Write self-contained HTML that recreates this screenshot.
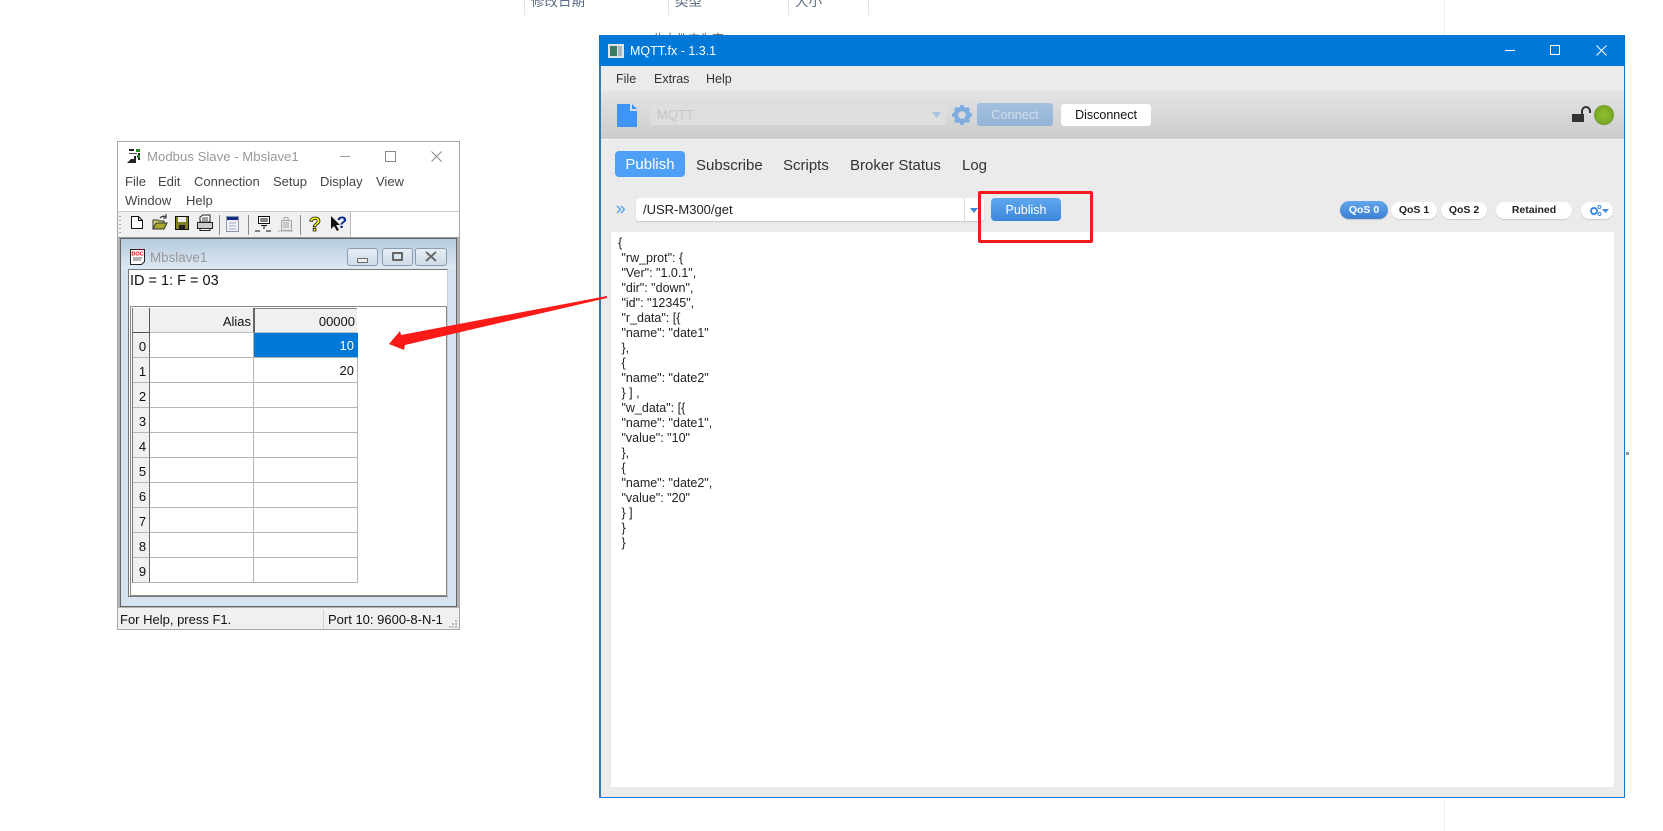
<!DOCTYPE html>
<html><head><meta charset="utf-8"><title>MQTT.fx and Modbus Slave</title>
<style>
html,body{margin:0;padding:0;background:#fff;width:1663px;height:831px;overflow:hidden}
body{position:relative;font-family:"Liberation Sans","Noto Sans CJK SC",sans-serif;color:#222}
.a{position:absolute;box-sizing:border-box}
.t{position:absolute;white-space:nowrap;line-height:16px;height:16px}
.m{font-size:13px;color:#444}
.q{position:absolute;box-sizing:border-box;top:202px;height:17px;background:#fff;border-radius:9px;text-align:center;font-size:10.5px;font-weight:bold;line-height:17px;color:#222;box-shadow:0 1px 1px #ccc}
.row{position:absolute;left:133px;width:17px;height:25px;background:#f0f0f0;border-bottom:1px solid #b5b5b5;border-right:1px solid #666;box-sizing:border-box;font-size:13px;line-height:27px;text-align:center;padding-left:3px;color:#111}
.cell{position:absolute;height:25px;box-sizing:border-box;border-bottom:1px solid #b5b5b5;border-right:1px solid #b5b5b5;font-size:13px;line-height:26px;text-align:right;padding-right:2px;color:#111}
.cb{position:absolute;top:248px;height:18px;box-sizing:border-box;border:1px solid #8b9cae;border-radius:3px;background:linear-gradient(#e6edf4,#cfdbe7)}
</style></head><body>

<!-- background explorer fragments -->
<div class="a" style="left:524px;top:0;width:1px;height:15px;background:#e5e5e5"></div>
<div class="a" style="left:668px;top:0;width:1px;height:15px;background:#e5e5e5"></div>
<div class="a" style="left:788px;top:0;width:1px;height:15px;background:#e5e5e5"></div>
<div class="a" style="left:868px;top:0;width:1px;height:15px;background:#e5e5e5"></div>
<div class="t" style="left:531px;top:-6px;font-size:13.5px;color:#5a6c84">修改日期</div>
<div class="t" style="left:675px;top:-6px;font-size:13.5px;color:#5a6c84">类型</div>
<div class="t" style="left:795px;top:-6px;font-size:13.5px;color:#5a6c84">大小</div>
<div class="t" style="left:652px;top:31px;font-size:12px;color:#666">此文件夹为空。</div>
<div class="a" style="left:1444px;top:0;width:1px;height:831px;background:#f0f0f0"></div>
<div class="a" style="left:1626px;top:452px;width:3px;height:3px;background:#8c93a0"></div>

<!-- Modbus Slave window -->
<div class="a" style="left:117px;top:141px;width:343px;height:489px;background:#fff;border:1px solid #a6a6a6"></div>
<svg class="a" style="left:126px;top:148px" width="16" height="16" viewBox="0 0 16 16"><rect x="3" y="1" width="5" height="2" fill="#222"/><rect x="10" y="1" width="4" height="3" fill="#2a8a2a"/><rect x="12" y="5" width="2" height="7" fill="#222"/><rect x="11" y="7" width="3" height="3" fill="#2a8a2a"/><path d="M1 15L5 11h3v-3h2v7z" fill="#222"/><rect x="3" y="5" width="8" height="1" fill="#555"/></svg>
<div class="t" style="left:147px;top:149px;font-size:13.2px;color:#999">Modbus Slave - Mbslave1</div>
<div class="a" style="left:340px;top:156px;width:10px;height:1px;background:#999"></div>
<div class="a" style="left:385px;top:151px;width:11px;height:11px;border:1px solid #888"></div>
<svg class="a" style="left:431px;top:151px" width="11" height="11"><path d="M.5.5l10 10M10.500.5l-10 10" stroke="#888" fill="none"/></svg>
<div class="t m" style="left:125px;top:174px">File</div>
<div class="t m" style="left:158px;top:174px">Edit</div>
<div class="t m" style="left:194px;top:174px">Connection</div>
<div class="t m" style="left:273px;top:174px">Setup</div>
<div class="t m" style="left:320px;top:174px">Display</div>
<div class="t m" style="left:376px;top:174px">View</div>
<div class="t m" style="left:125px;top:193px">Window</div>
<div class="t m" style="left:186px;top:193px">Help</div>
<div class="a" style="left:118px;top:211px;width:341px;height:1px;background:#ccc"></div>
<div class="a" style="left:118px;top:212px;width:233px;height:25px;background:#f0f0f0;border-right:1px solid #bbb"></div>
<svg class="a" style="left:117px;top:212px" width="236" height="25" viewBox="117 212 236 25">
<path d="M120 216v1M120 220v1M120 224v1M120 228v1M120 232v1" stroke="#aaa" stroke-width="2" fill="none"/>
<path d="M131.500 216.500h7l4 4v8h-11zM138.500 216.500v4h4" fill="#fff" stroke="#111"/>
<path d="M153 229v-9h5l1 1h5v8z" fill="#d8d870" stroke="#333"/><path d="M153 229l3-6h11l-3 6z" fill="#a8a830" stroke="#333"/><path d="M160 218q3-3 6-1M166 214v4h-3" fill="none" stroke="#222"/>
<rect x="175.500" y="216.500" width="13" height="13" fill="#808020" stroke="#111"/><rect x="178" y="217" width="8" height="5" fill="#eee"/><rect x="179" y="225" width="6" height="4" fill="#222"/>
<path d="M200 222v-5l3-2h7v7z" fill="#fff" stroke="#222"/><path d="M197.500 222.500h15v6h-15z" fill="#ccc" stroke="#222"/><path d="M200 228.500h10v2h-10z" fill="#fff" stroke="#222"/><path d="M202 218h6M202 220h6" stroke="#444"/>
<path d="M219.500 215v20M248.500 215v20M300.500 215v20" stroke="#8a8a8a"/>
<rect x="226.500" y="216.500" width="12" height="15" fill="#eef" stroke="#8b99a8"/><rect x="227" y="217" width="11" height="3" fill="#102a8a"/><path d="M229 223h7M229 226h7M229 229h7" stroke="#a8b0bb"/>
<rect x="258.500" y="216.500" width="11" height="7" fill="#fff" stroke="#111"/><path d="M260 219h8M260 221h8" stroke="#111"/><path d="M261 225.500h6M264 226v3M255 231h5M266 231h5" stroke="#111" fill="none"/>
<rect x="281.500" y="220.500" width="10" height="10" fill="#e8e8e8" stroke="#a8a8a8"/><path d="M284 217.500h4v3h-4zM283 223h6M283 225h6M283 227h6M278 231h15" stroke="#a8a8a8" fill="none"/>
<text x="315" y="231" font-family="Liberation Sans" font-weight="bold" font-size="20" text-anchor="middle" fill="#ff0" stroke="#111" stroke-width=".8">?</text>
<path d="M331 216v13l3-3 3 5 2-1-3-5h4z" fill="#111"/>
<text x="342" y="228" font-family="Liberation Sans" font-weight="bold" font-size="17" text-anchor="middle" fill="#102a8a">?</text>
</svg>

<!-- MDI frame -->
<div class="a" style="left:118px;top:237px;width:341px;height:371px;background:#b4b4b4;border-top:1px solid #999"></div>
<div class="a" style="left:120px;top:238px;width:337px;height:369px;background:#d5e3f1;border:1px solid #666"></div>
<div class="a" style="left:121px;top:239px;width:335px;height:30px;background:linear-gradient(#b6cadd,#dde8f2)"></div>
<svg class="a" style="left:130px;top:249px" width="16" height="16"><path d="M.5.500h14v12l-3 3h-11z" fill="#fff" stroke="#222"/><rect x="2" y="2" width="11" height="4" fill="#fff"/><text x="7.500" y="6.500" font-size="5.500" font-weight="bold" font-family="Liberation Sans" fill="#d00" text-anchor="middle">DOC</text><path d="M3 9h9M3 11h8" stroke="#666"/></svg>
<div class="t" style="left:150px;top:250px;font-size:13.4px;color:#999">Mbslave1</div>
<div class="cb" style="left:347px;width:31px"><div class="a" style="left:9px;top:9px;width:11px;height:5px;border:1px solid #666;background:#eee;border-radius:1px"></div></div>
<div class="cb" style="left:382px;width:31px"><div class="a" style="left:9px;top:3px;width:11px;height:9px;border:2px solid #666;border-radius:1px"></div></div>
<div class="cb" style="left:415px;width:32px"><svg class="a" style="left:9px;top:2px" width="12" height="12"><path d="M1 1l10 9M11 1l-10 9" stroke="#6a6a6a" stroke-width="2"/></svg></div>

<div class="a" style="left:128px;top:269px;width:320px;height:328px;background:#fff;border:1px solid #777;border-right-color:#ccc"></div>
<div class="t" style="left:130px;top:273px;font-size:14.5px;color:#111">ID = 1: F = 03</div>
<div class="a" style="left:130px;top:306px;width:317px;height:290px;background:#fff;border:1px solid #888"></div>

<div class="a" style="left:132px;top:308px;width:1px;height:275px;background:#777"></div>
<div class="a" style="left:133px;top:308px;width:17px;height:25px;background:#f0f0f0;border-right:1px solid #555;border-bottom:1px solid #555"></div>
<div class="a" style="left:150px;top:308px;width:105px;height:25px;background:#f0f0f0;border-right:2px solid #666;border-bottom:1px solid #bbb;font-size:13px;line-height:27px;text-align:right;padding-right:2px;color:#111">Alias</div>
<div class="a" style="left:255px;top:308px;width:102px;height:25px;background:#f0f0f0;border-bottom:1px solid #bbb;border-top:1px solid #888;font-size:13px;line-height:26px;text-align:right;padding-right:2px;color:#111">00000</div>

<div class="row" style="top:333px">0</div><div class="cell" style="left:150px;top:333px;width:104px"></div><div class="cell" style="left:254px;top:333px;width:104px;background:#0078d7;color:#fff;border-right-color:#0078d7;padding-right:3px">10</div>
<div class="row" style="top:358px">1</div><div class="cell" style="left:150px;top:358px;width:104px"></div><div class="cell" style="left:254px;top:358px;width:104px;padding-right:3px">20</div>
<div class="row" style="top:383px">2</div><div class="cell" style="left:150px;top:383px;width:104px"></div><div class="cell" style="left:254px;top:383px;width:104px"></div>
<div class="row" style="top:408px">3</div><div class="cell" style="left:150px;top:408px;width:104px"></div><div class="cell" style="left:254px;top:408px;width:104px"></div>
<div class="row" style="top:433px">4</div><div class="cell" style="left:150px;top:433px;width:104px"></div><div class="cell" style="left:254px;top:433px;width:104px"></div>
<div class="row" style="top:458px">5</div><div class="cell" style="left:150px;top:458px;width:104px"></div><div class="cell" style="left:254px;top:458px;width:104px"></div>
<div class="row" style="top:483px">6</div><div class="cell" style="left:150px;top:483px;width:104px"></div><div class="cell" style="left:254px;top:483px;width:104px"></div>
<div class="row" style="top:508px">7</div><div class="cell" style="left:150px;top:508px;width:104px"></div><div class="cell" style="left:254px;top:508px;width:104px"></div>
<div class="row" style="top:533px">8</div><div class="cell" style="left:150px;top:533px;width:104px"></div><div class="cell" style="left:254px;top:533px;width:104px"></div>
<div class="row" style="top:558px">9</div><div class="cell" style="left:150px;top:558px;width:104px"></div><div class="cell" style="left:254px;top:558px;width:104px"></div>

<!-- status bar -->
<div class="a" style="left:118px;top:608px;width:341px;height:21px;background:#f0f0f0"></div>
<div class="a" style="left:323px;top:610px;width:1px;height:19px;background:#d0d0d0"></div>
<div class="t" style="left:120px;top:612px;font-size:13px;color:#111">For Help, press F1.</div>
<div class="t" style="left:328px;top:612px;font-size:13px;color:#111">Port 10: 9600-8-N-1</div>
<svg class="a" style="left:448px;top:618px" width="10" height="10"><path d="M7 2h2v2H7zM4 5h2v2H4zM7 5h2v2H7zM1 8h2v2H1zM4 8h2v2H4zM7 8h2v2H7z" fill="#bbb"/></svg>

<!-- MQTT.fx window -->
<div class="a" style="left:599px;top:35px;width:1026px;height:763px;background:#ebebeb;border:1px solid #0f7bd8;border-left:2px solid #3a78b0;border-top:0"></div>
<div class="a" style="left:599px;top:35px;width:1026px;height:31px;background:#0078d7"></div>
<svg class="a" style="left:608px;top:44px" width="16" height="14"><rect width="16" height="14" fill="#dfe6ea"/><rect x="2" y="2" width="7" height="10" fill="#3d7a62"/><rect x="10" y="2" width="4" height="10" fill="#aab6bd"/></svg>
<div class="t" style="left:630px;top:43px;font-size:12.5px;color:#fff">MQTT.fx - 1.3.1</div>
<div class="a" style="left:1505px;top:50px;width:10px;height:1px;background:#fff"></div>
<div class="a" style="left:1550px;top:45px;width:10px;height:10px;border:1px solid #fff"></div>
<svg class="a" style="left:1596px;top:45px" width="11" height="11"><path d="M.5.500l10 10M10.500.500l-10 10" stroke="#fff" fill="none"/></svg>

<div class="t" style="left:616px;top:71px;font-size:12.5px;color:#333">File</div>
<div class="t" style="left:654px;top:71px;font-size:12.5px;color:#333">Extras</div>
<div class="t" style="left:706px;top:71px;font-size:12.5px;color:#333">Help</div>

<div class="a" style="left:601px;top:91px;width:1023px;height:49px;background:linear-gradient(#e4e3e6,#cccccc);border-bottom:1px solid #f6f6f6"></div>
<svg class="a" style="left:617px;top:104px" width="21" height="23"><path d="M0 0h13v7h7v16H0zM15 0l5 5h-5z" fill="#3f95f5"/></svg>
<div class="a" style="left:650px;top:104px;width:296px;height:21px;background:#dedede;border-radius:3px"></div>
<div class="t" style="left:657px;top:107px;font-size:13px;color:#c4c4c4">MQTT</div>
<svg class="a" style="left:932px;top:112px" width="9" height="6"><path d="M0 0h9L4.500 6z" fill="#a9c5e6"/></svg>
<svg class="a" style="left:951px;top:104px" width="22" height="22" viewBox="0 0 22 22"><circle cx="11" cy="11" r="6" fill="none" stroke="#7eaee0" stroke-width="4.500"/><path d="M11 1v20M1 11h20M4 4l14 14M18 4L4 18" stroke="#7eaee0" stroke-width="3.500"/><circle cx="11" cy="11" r="3.800" fill="#d8d8da"/></svg>
<div class="a" style="left:977px;top:103px;width:76px;height:23px;background:linear-gradient(#a4c0de,#94b4d6);border-radius:3px;color:#d3dfec;font-size:12.8px;text-align:center;line-height:23px">Connect</div>
<div class="a" style="left:1061px;top:104px;width:90px;height:22px;background:#fff;border-radius:3px;color:#111;font-size:12.5px;text-align:center;line-height:22px">Disconnect</div>
<svg class="a" style="left:1572px;top:106px" width="19" height="16"><rect y="8" width="12" height="8" fill="#333"/><path d="M10 9V5a4 4 0 0 1 8 0v2" fill="none" stroke="#333" stroke-width="2"/></svg>
<div class="a" style="left:1594px;top:105px;width:20px;height:20px;border-radius:50%;background:radial-gradient(circle,#8fbe2d 0%,#80ad28 50%,#5e8a16 100%)"></div>

<div class="a" style="left:615px;top:151px;width:70px;height:26px;background:#4da0f5;border-radius:4px;color:#fff;font-size:15px;line-height:28px;text-align:center">Publish</div>
<div class="t" style="left:696px;top:158px;font-size:15px;color:#333">Subscribe</div>
<div class="t" style="left:783px;top:158px;font-size:15px;color:#333">Scripts</div>
<div class="t" style="left:850px;top:158px;font-size:15px;color:#333">Broker Status</div>
<div class="t" style="left:962px;top:158px;font-size:15px;color:#333">Log</div>

<svg class="a" style="left:616px;top:205px" width="9" height="9"><path d="M1 1l3.500 3.500L1 8M5 1l3.500 3.500L5 8" fill="none" stroke="#4d9ff0" stroke-width="1.300"/></svg>
<div class="a" style="left:636px;top:198px;width:348px;height:23px;background:#fff;border-radius:3px;box-shadow:0 1px 1px #ccc"></div>
<div class="a" style="left:964px;top:198px;width:1px;height:23px;background:#dcdcdc"></div>
<svg class="a" style="left:970px;top:208px" width="8" height="5"><path d="M0 0h8L4 5z" fill="#3d85d8"/></svg>
<div class="t" style="left:643px;top:202px;font-size:13px;color:#222">/USR-M300/get</div>
<div class="a" style="left:991px;top:198px;width:70px;height:23px;background:linear-gradient(#5fa8ef,#3b86da);border-radius:4px;color:#fff;font-size:12.5px;line-height:24px;text-align:center">Publish</div>

<div class="q" style="left:1340px;width:48px;top:201px;height:18px;line-height:18px;background:linear-gradient(#62a6ee,#3a7fcf);color:#fff">QoS 0</div>
<div class="q" style="left:1391px;width:46px">QoS 1</div>
<div class="q" style="left:1441px;width:46px">QoS 2</div>
<div class="q" style="left:1496px;width:76px">Retained</div>
<div class="q" style="left:1581px;width:32px"></div>
<svg class="a" style="left:1589px;top:204px" width="20" height="13" viewBox="0 0 20 13"><circle cx="5" cy="7" r="3" fill="none" stroke="#3d8ae0" stroke-width="2"/><circle cx="10.500" cy="3" r="1.500" fill="none" stroke="#3d8ae0"/><circle cx="10.500" cy="10" r="1.500" fill="none" stroke="#3d8ae0"/><path d="M13 5h7l-3.500 4z" fill="#3d8ae0"/></svg>

<div class="a" style="left:611px;top:232px;width:1003px;height:555px;background:#fff;border-radius:2px"></div>
<pre class="a" style="left:618px;top:236px;margin:0;font:12.5px/15px 'Liberation Sans',sans-serif;color:#222">{
 "rw_prot": {
 "Ver": "1.0.1",
 "dir": "down",
 "id": "12345",
 "r_data": [{
 "name": "date1"
 },
 {
 "name": "date2"
 } ] ,
 "w_data": [{
 "name": "date1",
 "value": "10"
 },
 {
 "name": "date2",
 "value": "20"
 } ]
 }
 }</pre>

<!-- annotations -->
<div class="a" style="left:978px;top:191px;width:115px;height:52px;border:3px solid #f4191c;border-radius:2px"></div>
<svg class="a" style="left:0;top:0" width="1663" height="831"><polygon points="389,344 400,331 401,335 607,296 607,298 405,345 404,350" fill="#fa1a18"/></svg>
</body></html>
